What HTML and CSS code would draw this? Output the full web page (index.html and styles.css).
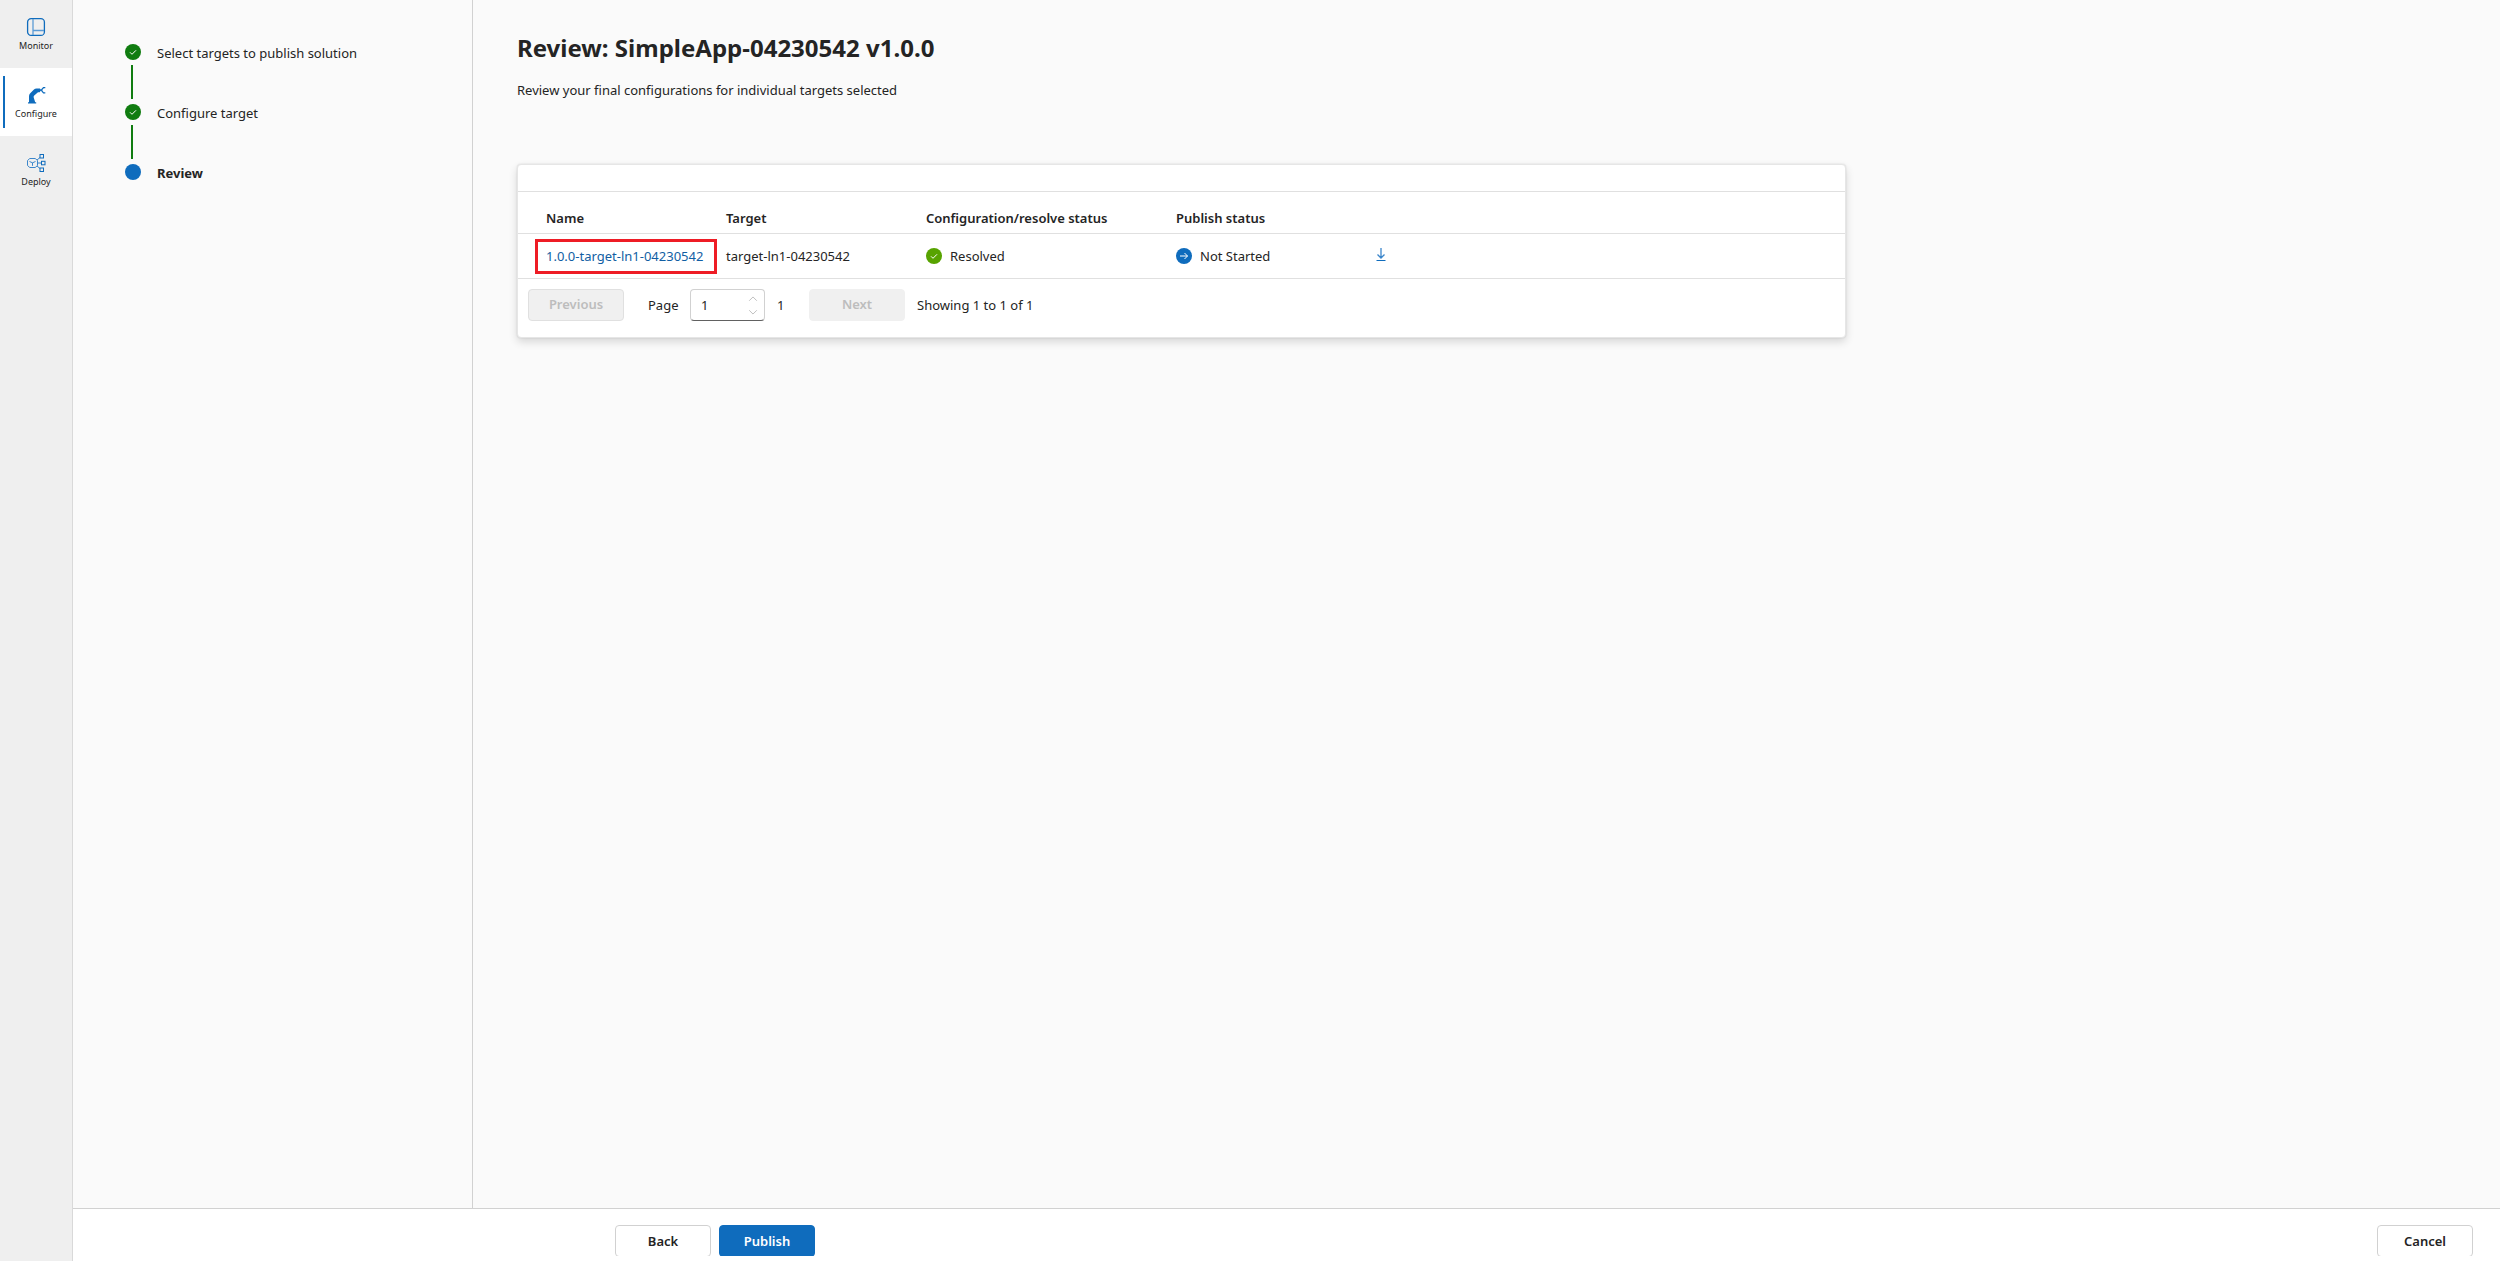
FILE: index.html
```html
<!DOCTYPE html>
<html lang="en">
<head>
<meta charset="utf-8">
<meta name="viewport" content="width=device-width, initial-scale=1">
<title>Review solution</title>
<link rel="stylesheet" href="styles.css">
</head>
<body>
<div class="app">
  <nav class="rail" aria-label="Main">
    <a class="rail-item" href="#monitor">
      <svg class="rail-icon" viewBox="0 0 20 20" fill="none" stroke="#0f6cbd"><rect x="1.6" y="1.6" width="16.8" height="16.8" rx="3.500" stroke-width="1.300"/><path d="M7 2v16M7 13.500h11" stroke="#5b9bd5" stroke-width="1.300"/></svg>
      Monitor
    </a>
    <a class="rail-item is-active" href="#configure" aria-current="page">
      <svg class="rail-icon" viewBox="0 0 20 20"><path d="M2 18.500v-1.300h1V11.500c0-1.500.5-2.500 1.500-3.500l3.200-3.200c.8-.8 1.800-1.200 3-1.200H14l1 1.600-1.300 2H12l-3.500 3c-.7.700-1 1.300-.8 2.300l1.500 4.700h1v1.300z" fill="#0f6cbd"/><path d="M14 5.200h2M19.300 2.600h-1.800L15.800 4.500v1.300l1.700 2h1.800" fill="none" stroke="#0f6cbd" stroke-width="1.300"/></svg>
      Configure
    </a>
    <a class="rail-item" href="#deploy">
      <svg class="rail-icon" viewBox="0 0 20 20" fill="none" stroke="#0f6cbd"><path d="M3.800 5.500h5.400l2.300 2v5l-2.300 2H3.800l-2.300-2v-5zM3.500 8.500l3 1.300 3-1.300M6.500 9.800v3M11 7l3-2.500M11.500 10H15M11 13l3 2.500" stroke="#3b86cb"/><rect x="14" y="1.500" width="3.500" height="3.500"/><rect x="15.500" y="8.300" width="3.500" height="3.500"/><rect x="14" y="15" width="3.500" height="3.500"/></svg>
      Deploy
    </a>
  </nav>

  <div class="workspace">
    <div class="content">
      <aside class="steps">
        <ol class="step-list">
          <li class="step is-done">
            <svg class="dot" viewBox="0 0 16 16"><circle cx="8" cy="8" r="8" fill="#107c10"/><path d="M5 8.300l2 2 4-4" fill="none" stroke="#fff"/></svg>
            <span>Select targets to publish solution</span>
          </li>
          <li class="step is-done">
            <svg class="dot" viewBox="0 0 16 16"><circle cx="8" cy="8" r="8" fill="#107c10"/><path d="M5 8.300l2 2 4-4" fill="none" stroke="#fff"/></svg>
            <span>Configure target</span>
          </li>
          <li class="step is-current" aria-current="step">
            <svg class="dot" viewBox="0 0 16 16"><circle cx="8" cy="8" r="8" fill="#0f6cbd"/></svg>
            <span>Review</span>
          </li>
        </ol>
      </aside>

      <main class="main">
        <h1 class="title">Review: SimpleApp-04230542 v1.0.0</h1>
        <p class="subtitle">Review your final configurations for individual targets selected</p>

        <section class="card">
          <div class="card-bar"></div>
          <table class="grid">
            <colgroup><col class="col-name"><col class="col-target"><col class="col-config"><col class="col-publish"><col></colgroup>
            <thead>
              <tr><th scope="col">Name</th><th scope="col">Target</th><th scope="col">Configuration/resolve status</th><th scope="col">Publish status</th><th></th></tr>
            </thead>
            <tbody>
              <tr>
                <td><a class="target-link" href="#target">1.0.0-target-ln1-04230542</a></td>
                <td>target-ln1-04230542</td>
                <td><span class="status"><svg class="dot" viewBox="0 0 16 16"><circle cx="8" cy="8" r="8" fill="#57a300"/><path d="M5 8.300l2 2 4-4" fill="none" stroke="#fff"/></svg>Resolved</span></td>
                <td><span class="status"><svg class="dot" viewBox="0 0 16 16"><circle cx="8" cy="8" r="8" fill="#0f6cbd"/><path d="M4 8h7.500M8.500 5l3 3-3 3" fill="none" stroke="#fff"/></svg>Not Started</span></td>
                <td><button class="download" type="button" aria-label="Download"><svg viewBox="0 0 16 16" fill="none" stroke="#0f6cbd"><path d="M8 1v10M4.500 7.500L8 11l3.500-3.500" stroke="#3b86cb" stroke-width="1.300"/><path d="M3.500 13.500h9"/></svg></button></td>
              </tr>
            </tbody>
          </table>
          <div class="pager">
            <button class="btn btn-prev" type="button" disabled>Previous</button>
            <label class="page-label" for="page">Page</label>
            <span class="spin">
              <input class="spin-input" id="page" type="number" value="1" min="1" max="1">
              <svg class="spin-arrows" viewBox="0 0 10 20" fill="none" stroke="#bdbdbd"><path d="M1 5l4-4 4 4M1 15l4 4 4-4"/></svg>
            </span>
            <span class="page-count">1</span>
            <button class="btn btn-next" type="button" disabled>Next</button>
            <span class="summary">Showing 1 to 1 of 1</span>
          </div>
        </section>
      </main>
    </div>

    <footer class="footer">
      <div class="actions">
        <button class="btn" type="button">Back</button>
        <button class="btn btn-primary" type="button">Publish</button>
        <button class="btn btn-cancel" type="button">Cancel</button>
      </div>
    </footer>
  </div>
</div>
</body>
</html>
```
FILE: styles.css
```css
*, *::before, *::after { box-sizing: border-box; }

body {
  margin: 0;
  background: #fafafa;
  color: #242424;
  font: 13px/20px "Noto Sans", "Open Sans", sans-serif;
}

.app { display: flex; min-height: 100vh; }

/* Left navigation rail */
.rail {
  flex: none;
  width: 73px;
  background: #efefef;
  border-right: 1px solid #d9d9d9;
}
.rail-item {
  display: flex;
  flex-direction: column;
  align-items: center;
  gap: 1px;
  height: 68px;
  padding-top: 17px;
  color: #242424;
  font-size: 9px;
  line-height: 16px;
  text-decoration: none;
}
.rail-item.is-active {
  background: linear-gradient(#0f6cbd, #0f6cbd) 3px 8px / 2px 52px no-repeat #fff;
}
.rail-icon { width: 20px; height: 20px; }

.workspace { flex: 1; display: flex; flex-direction: column; min-width: 0; }
.content { flex: 1; display: flex; }

/* Wizard steps */
.steps {
  flex: none;
  width: 400px;
  padding: 44px 52px;
  border-right: 1px solid #d1d1d1;
}
.step-list { margin: 0; padding: 0; list-style: none; }
.step {
  display: grid;
  grid-template-columns: 16px 1fr;
  grid-template-rows: 16px 34px;
  column-gap: 16px;
  row-gap: 5px;
  height: 60px;
}
.step span { line-height: 18px; }
.step.is-done::after {
  content: "";
  width: 2px;
  margin-left: 6px;
  background: #107c10;
}
.step.is-current { font-weight: 700; }
.dot { display: block; flex: none; width: 16px; height: 16px; }

/* Main column */
.main { flex: 1; min-width: 0; padding: 32px 44px; }
.title { margin: 0; font-size: 24px; line-height: 32px; font-weight: 700; }
.subtitle { margin: 16px 0 64px; line-height: 20px; }

.card {
  max-width: 1329px;
  background: #fff;
  border: 1px solid #e6e6e6;
  border-radius: 4px;
  box-shadow: 0 4px 8px rgba(0, 0, 0, .14), 0 0 2px rgba(0, 0, 0, .12);
}
.card-bar { height: 27px; border-bottom: 1px solid #e0e0e0; }

.grid { width: 100%; table-layout: fixed; border-collapse: collapse; }
.grid tr { border-bottom: 1px solid #e0e0e0; }
.grid th, .grid td { padding: 0 8px; text-align: left; }
.grid th:first-child, .grid td:first-child { padding-left: 28px; padding-right: 0; }
.grid th { height: 41px; padding-top: 12px; font-weight: 600; }
.grid td { height: 45px; }
.col-name, .col-target, .col-publish { width: 200px; }
.col-config { width: 250px; }

.target-link {
  position: relative;
  display: inline-block;
  color: #115ea3;
  text-decoration: none;
}
.target-link::after {
  content: "";
  position: absolute;
  top: -7px;
  left: -11px;
  width: 182px;
  height: 35px;
  border: 3px solid #ee1c25;
}
.status { display: flex; align-items: center; gap: 8px; }
.download {
  display: block;
  width: 16px;
  height: 16px;
  margin: 0 0 2px -3px;
  padding: 0;
  border: 0;
  background: none;
}
.download svg { display: block; }

.btn {
  width: 96px;
  height: 32px;
  padding: 0 0 1px;
  border: 1px solid #d1d1d1;
  border-radius: 4px;
  background: #fff;
  color: #242424;
  font: 600 13px/20px "Noto Sans", "Open Sans", sans-serif;
}
.btn:disabled { background: #f0f0f0; border-color: #e0e0e0; color: #bdbdbd; }
.btn-next:disabled { border-color: #f0f0f0; }
.btn-primary { background: #0f6cbd; border-color: #0f6cbd; color: #fff; }

.pager { display: flex; align-items: center; padding: 10px 10px 16px; }
.page-label { width: 42px; margin-left: 24px; }
.spin { position: relative; display: flex; width: 75px; }
.spin-input {
  width: 100%;
  height: 32px;
  padding: 0 10px;
  border: 1px solid #d1d1d1;
  border-bottom-color: #616161;
  border-radius: 4px;
  background: #fff;
  color: #242424;
  font: inherit;
  appearance: textfield;
}
.spin-arrows { position: absolute; top: 7px; right: 7px; width: 10px; height: 19px; }
.page-count { width: 32px; margin-left: 12px; }
.summary { margin-left: 12px; }

/* Bottom action bar */
.footer {
  padding: 16px 27px 5px 542px;
  border-top: 1px solid #d1d1d1;
  background: #fff;
}
.actions { display: flex; gap: 8px; height: 31px; overflow: hidden; }
.btn-cancel { margin-left: auto; }
```
